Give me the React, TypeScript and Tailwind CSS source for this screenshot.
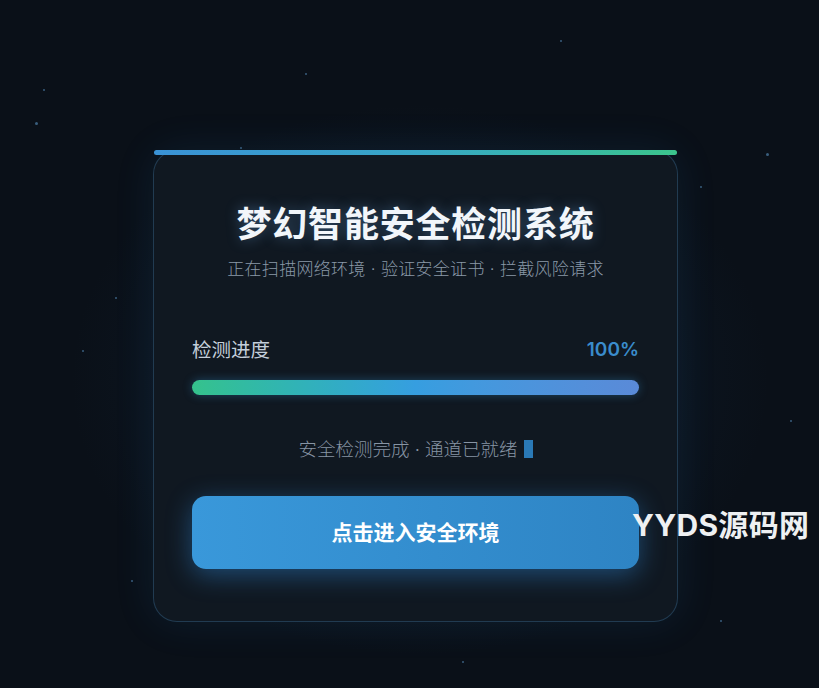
const stars = [
  { x: 305, y: 73, s: 2 },
  { x: 35, y: 122, s: 3 },
  { x: 43, y: 89, s: 2 },
  { x: 766, y: 153, s: 3 },
  { x: 700, y: 186, s: 2 },
  { x: 115, y: 297, s: 2 },
  { x: 82, y: 350, s: 2 },
  { x: 240, y: 147, s: 2 },
  { x: 462, y: 661, s: 2 },
  { x: 131, y: 580, s: 2 },
  { x: 720, y: 620, s: 2 },
  { x: 790, y: 420, s: 2 },
  { x: 560, y: 40, s: 2 },
];

export default function App() {
  return (
    <div
      className="relative h-[688px] w-[819px] overflow-hidden bg-[#0a1018] pl-[153px] pt-[150px]"
      style={{ fontFamily: '"Inter", "Noto Sans CJK SC", sans-serif' }}
    >
      <div className="pointer-events-none absolute left-[40px] top-[80px] h-[600px] w-[760px] rounded-full bg-[radial-gradient(ellipse_at_center,rgba(30,70,110,0.28),transparent_65%)]" />
      {stars.map((star, i) => (
        <span
          key={i}
          className="absolute rounded-full bg-[#4d7fa8]/70"
          style={{ left: star.x, top: star.y, width: star.s, height: star.s }}
        />
      ))}

      <div className="relative w-[525px] rounded-[24px] border border-[#2a4a66]/70 bg-[#101821] px-[38px] pb-[52px] pt-[51px] shadow-[0_0_40px_rgba(40,120,200,0.12)]">
        <div className="absolute left-0 right-0 top-[-1px] h-[5px] rounded-full bg-gradient-to-r from-[#3a92d6] via-[#38a6c6] to-[#3cc48c]" />

        <h1 className="text-center text-[35px] font-bold leading-[44px] tracking-[0.8px] text-[#f2f6fa] [text-shadow:0_0_14px_rgba(120,190,255,0.35)]">
          梦幻智能安全检测系统
        </h1>
        <p className="mt-[11px] text-center text-[17px] font-light leading-[25px] tracking-[0.3px] text-[#8a98a8]">
          正在扫描网络环境 · 验证安全证书 · 拦截风险请求
        </p>

        <div className="mt-[55px] flex items-center justify-between">
          <span className="text-[19.5px] leading-[26px] text-[#c4cfdb]">检测进度</span>
          <span className="text-[19px] font-semibold leading-[26px] text-[#3a8ccc]">100%</span>
        </div>
        <div className="mt-[17px] h-[15px] rounded-full bg-gradient-to-r from-[#35c28c] via-[#369ee0] to-[#5a8ad8] shadow-[0_0_10px_rgba(54,158,224,0.35)]" />

        <div className="mt-[41px] flex items-center justify-center gap-[6px]">
          <span className="text-[18.5px] font-light leading-[26px] text-[#8794a4]">
            安全检测完成 · 通道已就绪
          </span>
          <span className="h-[18px] w-[9px] bg-[#2a79b6]" />
        </div>

        <button className="mt-[34px] flex h-[73px] w-full items-center justify-center rounded-[14px] bg-gradient-to-r from-[#3998da] to-[#2e84c4] text-[21px] font-bold text-white shadow-[0_6px_26px_rgba(48,140,220,0.45)]">
          点击进入安全环境
        </button>
      </div>

      <div className="absolute left-[632px] top-[506px] text-[30px] font-bold leading-[38px] tracking-[0.3px] text-[#eef0f2]">
        YYDS源码网
      </div>
    </div>
  );
}
